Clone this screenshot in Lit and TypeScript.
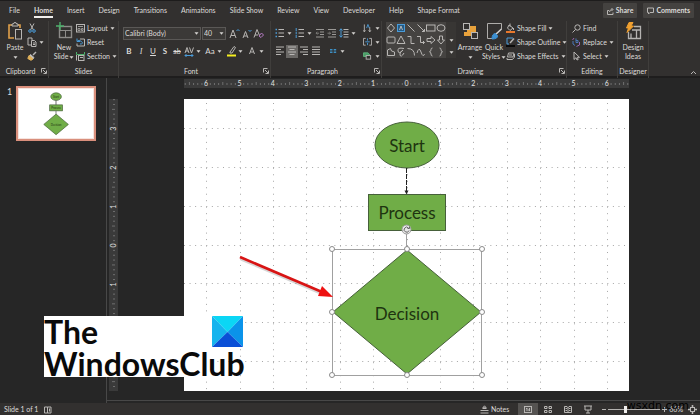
import { LitElement, html, svg, css, nothing } from "lit";
import { customElement, property, state } from "lit/decorators.js";
import { classMap } from "lit/directives/class-map.js";

const icon = (w: number, h: number, body: unknown) =>
  html`<svg class="icon" width=${w} height=${h} viewBox="0 0 ${w} ${h}" fill="none" stroke="#b8b6b4" aria-hidden="true">${body}</svg>`;

const chevron = html`<svg class="chev" width="5" height="3" viewBox="0 0 5 3" aria-hidden="true"><path d="M0.5 0.3h4L2.5 2.7z" fill="#d6d4d2" /></svg>`;
const launcher = (name: string) => html`<button class="launch" aria-label="${name} settings">
  ${icon(6, 6, svg`<path d="M0.5 4.5v-4h4M2 2l3 3M5.5 2.5v3h-3" />`)}
</button>`;

const icons = {
  paste: icon(16, 18, svg`<path d="M5 3H2v13h5M11 3h2v3" stroke="#e0a04a" stroke-width="1.6" /><path d="M5 4V2h1.500a1.500 1.500 0 0 1 3 0H11v2z" stroke="#bdbbb9" /><rect x="8.500" y="7.500" width="6" height="9.500" fill="#32302f" />`),
  cut: icon(8, 10, svg`<path d="M2 0.5L5.500 7M6 0.5L2.500 7" /><circle cx="2" cy="8" r="1.300" stroke="#4a9bd8" /><circle cx="6" cy="8" r="1.300" stroke="#4a9bd8" />`),
  copy: icon(10, 10, svg`<path d="M4 8H1V1h4v2M4.500 3.500h3l1.500 1.500v4.500H4.500zM6 6h2M6 7.500h2" />`),
  painter: icon(10, 10, svg`<path d="M9 1L6 4" stroke-width="1.500" /><path d="M3.500 3.500l3.500 3L6 8 2.500 4.500z" fill="#c4c2c0" /><path d="M2 4.500L0.800 7.500 4 9.300 6 8z" fill="#e2b25a" stroke="#e2b25a" />`),
  newSlide: icon(17, 18, svg`<rect x="3.500" y="4.500" width="12" height="11" stroke="#8d8b89" stroke-width="1.400" /><path d="M3.500 8.500h12M9.500 8.500v7" stroke="#8d8b89" /><path d="M4 0v8M0 4h8" stroke="#4db06c" stroke-width="1.400" />`),
  layout: icon(9, 9, svg`<rect x="0.500" y="0.500" width="8" height="7.500" /><path d="M2 2.500h5M2 4.500h2v2H2zM5.500 4.500H7v2H5.500z" stroke="#9a9896" />`),
  reset: icon(9, 9, svg`<path d="M4 1h4.500v7H1V5.500" /><path d="M1 0.500v3h3M1 3.500Q3 1 5.500 3.500T4 6" stroke="#4a9bd8" />`),
  section: icon(9, 9, svg`<path d="M0.500 0v2.500h8V0" stroke="#4db06c" /><rect x="2.500" y="3.500" width="5.500" height="5" /><path d="M0.500 3v5.500M4 5.500h3" />`),
  grow: icon(11, 11, svg`<path d="M1 10L4 2l3 8M2 7.500h4" /><path d="M7.500 3L9 1.500 10.500 3" stroke="#4a9bd8" />`),
  shrink: icon(11, 11, svg`<path d="M2 10l2.500-6.500L7 10M3 8h3" /><path d="M7.500 2L9 3.500 10.500 2" stroke="#4a9bd8" />`),
  clear: icon(11, 11, svg`<path d="M1 9.500L4 1.500l2.500 6M2 7h3" /><path d="M6 8l2.500-3L10.500 7 8 9.500z" stroke="#b57ac4" />`),
  spacing: icon(11, 11, svg`<path d="M1 7l2-5.500L5 7M2 5h2M5.500 1.500l2 5.500 2-5.500" /><path d="M1 9.500h8M2.500 8L1 9.500 2.500 11M7.500 8L9 9.500 7.500 11" stroke="#4a9bd8" />`),
  highlight: icon(11, 12, svg`<path d="M4 7l4-5.500 1.500 1L6 8H4z" /><path d="M1 10.500h9" stroke="#f5ee20" stroke-width="2" />`),
  fontColor: icon(10, 10, svg`<path d="M2.500 8L5 1.500 7.500 8M3.500 6h3" />`),
  bullets: icon(10, 10, svg`<path d="M3.500 1.500H9M3.500 5H9M3.500 8.500H9" /><path d="M0.500 1.500H2M0.500 5H2M0.500 8.500H2" stroke="#4a9bd8" stroke-width="1.500" />`),
  numbers: icon(10, 10, svg`<path d="M3.500 1.500H9M3.500 5H9M3.500 8.500H9" /><path d="M1.200 0v3M1.200 3.700v2.600M1.200 7v3" stroke="#4a9bd8" />`),
  outdent: icon(10, 10, svg`<path d="M1 1.500h8M5 4h4M5 6.500h4M1 9h8" stroke="#9a9896" /><path d="M4 5.200H1M2.300 4L1 5.200l1.300 1.300" stroke="#7d7b79" />`),
  indent: icon(10, 10, svg`<path d="M1 1.500h8M5 4h4M5 6.500h4M1 9h8" stroke="#9a9896" /><path d="M0.500 5.200h3M2.300 4l1.300 1.200L2.300 6.500" stroke="#7d7b79" />`),
  lineSpacing: icon(10, 10, svg`<path d="M4.500 1.500H9.500M4.500 4H9.500M4.500 6.500h5M4.500 9h5" /><path d="M2 0.800v8.400M0.500 2.500L2 0.800l1.500 1.700M0.500 7.500L2 9.200l1.500-1.700" stroke="#4a9bd8" />`),
  direction: icon(10, 11, svg`<path d="M1.500 1v8M0.300 7.500l1.200 1.800 1.200-1.800M7.500 4v5M6.300 7.500l1.200 1.800 1.200-1.800" /><path d="M4 5l1.500-4L7 5" stroke="#4a9bd8" />`),
  alignText: icon(10, 10, svg`<path d="M3 1H0.500v7.500H3M7 1h2.500v7.500H7" /><path d="M2.500 4.800h5M5 1v2.500M5 6v2.500" stroke="#4a9bd8" />`),
  smartArt: icon(10, 10, svg`<path d="M0.500 1.500h5l2 2-2 2h-5z" fill="#4c9b68" stroke="#5cb57c" /><rect x="3.500" y="4.500" width="5" height="4" fill="#32302f" />`),
  left: icon(10, 10, svg`<path d="M1 1h8M1 3.500h5M1 6h8M1 8.500h5" />`),
  center: icon(10, 10, svg`<path d="M1 1h8M2.500 3.500h5M1 6h8M2.500 8.500h5" />`),
  right: icon(10, 10, svg`<path d="M1 1h8M4 3.500h5M1 6h8M4 8.500h5" />`),
  justify: icon(10, 10, svg`<path d="M1 1h8M1 3.500h8M1 6h8M1 8.500h8" />`),
  columns: icon(8, 8, svg`<path d="M1 2.500h2.500M1 4h2.500M1 5.500h2.500M4.700 2.500h2.500M4.700 4h2.500M4.700 5.500h2.500" stroke="#3d8fc4" />`),
  arrange: icon(16, 18, svg`<rect x="5.500" y="4.500" width="8" height="9" fill="#e8a23c" stroke="#e8a23c" /><rect x="1.500" y="1.500" width="6" height="6" fill="#32302f" /><rect x="9.500" y="10.500" width="6" height="6" fill="#32302f" /><rect x="2" y="10" width="4" height="4" fill="#e8a23c" stroke="none" />`),
  quick: icon(17, 18, svg`<path d="M8 16.500H1.500v-15h14V7" stroke="#aeacaa" /><path d="M15.500 7L9 13" stroke="#d6d4d2" stroke-width="1.600" /><path d="M9.500 11.500Q6 11.500 6 17q6 0 5.500-3.500z" fill="#3c8fd0" stroke="#3c8fd0" />`),
  fill: icon(9, 10, svg`<path d="M3 2l4 3-3 2.500L1.500 5zM4 0.500v3M7.500 5v2" /><path d="M0 9h9" stroke="#e8782c" stroke-width="2" />`),
  outline: icon(9, 10, svg`<path d="M7 1H1v6h2" stroke="#4a9bd8" /><path d="M8 1.500L4 6" stroke-width="1.400" /><path d="M0 9h9" stroke="#0a0a0a" stroke-width="2" />`),
  effects: icon(9, 9, svg`<path d="M2.500 1h5.500l-1 4H1.500z" /><path d="M1 6v1.500h5.500L8.500 5V2M3 3h3" />`),
  find: icon(9, 9, svg`<circle cx="5.500" cy="3.500" r="2.700" /><path d="M3.500 5.500L0.500 8.500" />`),
  replace: icon(9, 10, svg`<path d="M4 1.500v4M4 3.500h2v2H4M1 4v3l2 1.500" stroke="#4a78b8" /><path d="M7.500 5v3l-3 1.500M2 1L0.500 3" stroke="#9a66b0" />`),
  select: icon(9, 10, svg`<path d="M2 1v7.500L4 6.700 5 9l1.200-0.500L5.300 6.300h2.200z" />`),
  ideas: icon(17, 18, svg`<path d="M9 4.500h6.500v12H3.500V10M7 8h8.500M11.500 8v8.500M6 11.500v5" stroke="#b5b3b1" stroke-width="1.300" /><path d="M4 0.500h4L6 4h2.500L2 10.500 3.500 6H1.500z" fill="#f0a030" stroke="#f0a030" />`),
  share: icon(7, 8, svg`<path d="M2 3.500H0.500v4h5.500v-2M2.500 5Q2.500 2.500 5.500 2.500M4.500 1l1.500 1.500L4.500 4" />`),
  comment: icon(7, 8, svg`<path d="M0.500 1h6v4.500H3L1.500 7V5.500h-1z" />`),
  spell: icon(8, 8, svg`<path d="M0.500 1h3v6h-3zM3.500 1H7v6H3.500M5.500 2.500v3" />`),
  notes: icon(9, 10, svg`<path d="M0.500 5.500h8M0.500 8h8M2.500 3.500h4M4.500 0.800L2.800 2.800h3.400z" />`),
  normal: icon(10, 9, svg`<rect x="1.500" y="1.500" width="7" height="6" /><path d="M3 5h3M3 3.500h1.500M6.500 3v3" />`),
  sorter: icon(10, 9, svg`<path d="M1.500 1.500h2.500v2H1.500zM6 1.500h2.500v2H6zM1.500 5.500h2.500v2H1.500zM6 5.500h2.500v2H6z" />`),
  reading: icon(10, 9, svg`<path d="M5 2v6M1.500 1.500H4L5 2.500l1-1h2.500v6H1.500zM2.500 3.500h1.500M6 3.500h1.500M2.500 5.500h1.500M6 5.500h1.500" />`),
  show: icon(10, 9, svg`<path d="M1 1h8M2 1v4h6V1M5 5v3M3 8h4" />`),
  fit: icon(9, 9, svg`<rect x="2.500" y="2.500" width="4" height="4" /><path d="M4.500 0v2M4.500 7v2M0 4.500h2M7 4.500h2" stroke-width="1.600" />`),
};

const shapes: [string, unknown][] = [
  ["Diamond", svg`<path d="M5 2l3.500 4L5 10 1.500 6z" />`],
  ["Text box", svg`<rect x="1.500" y="2.500" width="7" height="7" fill="#245a84" stroke="#4a9bd8" /><path d="M3.500 8L5 4l1.500 4" />`],
  ["Line", svg`<path d="M1.500 2.500l7 7" />`],
  ["Arrow", svg`<path d="M1.500 2.500l7 7M8.500 7v2.500H6" />`],
  ["Rectangle", svg`<rect x="0.500" y="3" width="8.500" height="6" />`],
  ["Oval", svg`<ellipse cx="5" cy="6" rx="4" ry="3.300" />`],
  ["Rounded rectangle", svg`<rect x="1" y="3" width="8" height="6" rx="1" />`],
  ["Triangle", svg`<path d="M5 2l4 7.500H1z" />`],
  ["Elbow connector", svg`<path d="M1.500 2.500H5v7h3.500" />`],
  ["Elbow arrow", svg`<path d="M1 2.500h3.500v6H8.500M7 7l1.500 1.500L7 10" />`],
  ["Right arrow", svg`<path d="M1 4.500h4v-2L9 6 5 9.500v-2H1z" />`],
  ["Down arrow", svg`<path d="M3.500 2h3v4h2L5 10 1.500 6h2z" />`],
  ["Freeform", svg`<path d="M1.500 9.500V4l3-1.500 1 2.500 3 1v3.500z" />`],
  ["Scribble", svg`<path d="M8 2.500Q1 1 2 5t5-1Q3 6 4 9t4-2" />`],
  ["Arc", svg`<path d="M1.500 2.500Q8.500 2.500 8.500 9.500" />`],
  ["Curve", svg`<path d="M1 7Q3 0 5 6t3.500 2" />`],
  ["Left brace", svg`<path d="M6.500 2Q5 2 5 3.500T3.500 6Q5 6 5 8t1.500 2" />`],
  ["Right brace", svg`<path d="M3.500 2Q5 2 5 3.500T6.500 6Q5 6 5 8t-1.500 2" />`],
];

/** Flowchart slide; the editor shows it with grid, selection frame and callout arrow. */
@customElement("slide-view")
class SlideView extends LitElement {
  @property({ type: Boolean, reflect: true }) editing = false;

  static styles = css`
    :host { display: block; background: #fff; }
    svg { display: block; width: 100%; height: auto; overflow: hidden; }
    .label { font: 17px Lato, sans-serif; fill: #1e3410; text-anchor: middle; }
    .shape { fill: #70ad47; stroke: #46603a; stroke-width: 4; }
    :host([editing]) .shape { stroke-width: 1; }
    .grid { stroke: #a6a6a6; }
    .frame { fill: none; stroke: #a0a0a0; }
    .handle { fill: #fff; stroke: #8a8a8a; }
  `;

  private gridLines() {
    const steps = [-6, -5, -4, -3, -2, -1, 0, 1, 2, 3, 4, 5, 6];
    return svg`
      ${steps.map((n) => svg`<path class="grid" stroke-dasharray="1 5.480" d="M${Math.round(222.5 + n * 33.4) + 0.5} 4v288" />`)}
      ${[-3, -2, -1, 0, 1, 2, 3].map((n) => svg`<path class="grid" stroke-dasharray="1 4.570" d="M0 ${Math.round(146.5 + n * 38.9) - 0.5}h445" />`)}`;
  }

  private selection() {
    const points = [[148, 150], [223, 150], [298, 150], [148, 213], [298, 213], [148, 276], [223, 276], [298, 276]];
    return svg`
      <path class="frame" d="M148.500 150.500h149v126h-149zM222.500 135v15" />
      ${points.map(([x, y]) => svg`<circle class="handle" cx=${x} cy=${y} r="2.500" />`)}
      <circle cx="222.500" cy="130.500" r="4.500" fill="#e8e8e8" stroke="#9a9a9a" />
      <path d="M224.500 129a2.500 2.500 0 1 0 0.500 2.500M225.500 127.500v2h-2" fill="none" stroke="#666" />`;
  }

  render() {
    return html`<svg viewBox="0 0 445 292" role="img" aria-label="Flowchart">
      ${this.editing ? this.gridLines() : nothing}
      <ellipse class="shape" cx="223" cy="46" rx="32" ry="23" />
      <path d="M222.500 69v24" stroke="#222" stroke-dasharray="5 1" />
      <path d="M220.500 91.500h4l-2 4z" fill="#222" />
      <rect class="shape" x="184.500" y="95.500" width="77" height="36" />
      <path class="shape" d="M223 151l74 62-74 62-74-62z" />
      ${this.editing ? nothing : svg`<path d="M222.500 69v26M222.500 132v19" stroke="#666" stroke-width="5" />`}
      <text class="label" x="223" y="53">Start</text>
      <text class="label" x="223" y="120">Process</text>
      <text class="label" x="223" y="221">Decision</text>
      ${this.editing ? this.selection() : nothing}
      ${this.editing
        ? svg`<path d="M57 160l82 35" stroke="#777" stroke-opacity="0.3" stroke-width="3" />
          <path d="M56 158l82 35" stroke="#d81414" stroke-width="2.600" />
          <path d="M138 187l11 11-15 -1z" fill="#ee1111" />`
        : nothing}
    </svg>`;
  }
}

@customElement("app-root")
class AppRoot extends LitElement {
  @state() private tab = "Home";

  static styles = css`
    :host {
      display: flex; flex-direction: column; min-height: 100vh; position: relative;
      background: #262626; color: #dddbd9; font: 7px/9px Lato, sans-serif; overflow: hidden;
    }
    * { box-sizing: border-box; }
    button, select {
      appearance: none; border: 0; padding: 0; margin: 0; background: none;
      color: inherit; font: inherit; text-align: inherit; border-radius: 0;
    }
    button { display: flex; align-items: center; white-space: nowrap; }
    svg { flex: none; display: block; }

    .tabs { display: flex; align-items: center; height: 20px; padding: 0 6px 0 9px; background: #32302f; border-top: 1px solid #1d1c1c; }
    .tabs nav { display: flex; gap: 14px; flex: 1; }
    .tab { height: 15px; border-top: 2px solid transparent; border-bottom: 2px solid transparent; }
    .tab.on { border-bottom-color: #f0eeec; font-weight: 700; }
    .pill { height: 15px; gap: 2px; padding: 0 4px; margin-left: 6px; background: #444240; border-radius: 1px; font-weight: 700; }

    .ribbon {
      display: grid; grid-template-columns: 49px 70px 152px 111px 185px 51px 31px 1fr;
      height: 58px; padding-top: 1px; background: #32302f; border-bottom: 2px solid #1e1d1d;
    }
    .group { display: flex; flex-direction: column; border-right: 1px solid #403e3c; min-width: 0; }
    .body { display: flex; height: 43px; }
    .foot { display: flex; align-items: center; height: 14px; }
    .foot span { flex: 1; text-align: center; white-space: nowrap; }
    .launch { width: 7px; }
    .big { flex-direction: column; justify-content: flex-start; gap: 3px; padding-top: 1px; width: 24px; height: 43px; }
    .big .text { text-align: center; }
    .big .chev { display: inline-block; vertical-align: middle; margin-left: 1px; }
    .list { display: flex; flex-direction: column; }
    .list button { height: 14px; gap: 2px; }
    .list .icon { width: 9px; }
    .clip { padding-left: 3px; }
    .clip .list button .icon { width: 10px; }
    .slides { padding-left: 3px; }
    .rows { display: flex; flex-direction: column; padding: 3px 0 0 3px; flex: 1; }
    .row { display: flex; align-items: center; height: 18px; }
    .tool { width: 12px; height: 13px; justify-content: center; font-size: 8px; }
    .tool.on { background: #6a6866; }
    .split { width: 20px; height: 13px; gap: 1px; font-size: 8px; }
    .split .face { display: flex; justify-content: center; width: 12px; }
    .split.apart { margin-left: 5px; }
    .bold { font-weight: 700; }
    .italic { font-style: italic; font-family: "Liberation Serif", serif; }
    .under { text-decoration: underline; }
    .strike { text-decoration: line-through; font-size: 7px; }
    .font .rows { padding-left: 4px; }
    .font .split { width: 21px; }
    .combo { display: grid; align-items: center; width: 78px; height: 13px; background: #3b3937; border: 1px solid #5a5856; margin-right: 1px; }
    .combo.size { width: 24px; margin-right: 2px; }
    .combo > * { grid-area: 1 / 1; }
    .combo select { width: 100%; padding-left: 1px; }
    .combo .chev { justify-self: end; margin-right: 1px; pointer-events: none; }
    .drawing { padding-left: 4px; }
    .gallery { display: grid; grid-template-columns: repeat(6, 10px) 10px; grid-auto-rows: 12px; margin: 1px 2px 0 0; height: 38px; }
    .gallery .cell { width: 10px; height: 12px; background: #454341; }
    .gallery .more { grid-column: 7; justify-content: center; background: #383634; height: 12px; }
    .drawing .list button, .editing .list button { height: 14px; }
    .editing { padding-left: 5px; }
    .designer { justify-content: center; }
    .collapse { display: flex; justify-content: flex-end; align-items: flex-end; padding: 0 3px 3px 0; }

    main { display: flex; flex: 1; }
    aside { width: 107px; padding: 8px 10px 0 7px; border-right: 1px solid #484848; display: flex; align-items: flex-start; gap: 5px; }
    .number { width: 4px; font-size: 9px; line-height: 11px; }
    .thumb { display: block; flex: 1; margin-bottom: 4px; border: 2px solid #d98f7c; padding: 1px; background: #f6e4df; }
    .editor {
      flex: 1; display: grid; grid-template-columns: 9px 1fr; grid-template-rows: 9px auto; row-gap: 11px;
      column-gap: 66px; padding: 1px 71px 9px 2px; margin-bottom: 2px; border-bottom: 1px solid #484848; align-content: start;
    }
    .ruler { background: #3a3a3a; width: 100%; height: auto; }
    .ruler text { font: 7px Lato, sans-serif; fill: #e4e4e4; text-anchor: middle; }
    .ruler.top { grid-column: 2; }

    footer { display: flex; align-items: center; height: 13px; background: #32302f; padding: 0 3px 0 4px; }
    footer .spell { margin-left: 6px; flex: 1; }
    footer .notes { gap: 2px; margin-right: 9px; }
    .view { width: 20px; height: 13px; justify-content: center; }
    .view.on { background: #555351; }
    .zoom { display: flex; align-items: center; gap: 2px; margin-left: 4px; }
    .zoom input { appearance: none; width: 52px; height: 9px; margin: 0; background: linear-gradient(#b4b2b0, #b4b2b0) center / 100% 1px no-repeat; }
    .zoom input::-webkit-slider-thumb { appearance: none; width: 3px; height: 7px; background: #f0eeec; }
    .percent { margin: 0 5px 0 2px; }

    .brand { position: absolute; left: 44px; bottom: 39px; width: 170px; height: 61px; background: #fff; color: #0a0a0a; font: 700 32px/32px Lato, sans-serif; white-space: nowrap; }
    .brand p { margin: 0; }
    .brand svg { position: absolute; left: 168px; top: 0; }
    .mark { position: absolute; right: 11px; bottom: 4px; color: #000; font: 11px/13px "DejaVu Sans", sans-serif; }
  `;

  private tool(label: string, face: unknown, cls = "") {
    return html`<button class="tool ${cls}" aria-label=${label}>${face}</button>`;
  }

  private split(label: string, face: unknown, cls = "") {
    return html`<button class="split ${cls}" aria-label=${label}><span class="face">${face}</span>${chevron}</button>`;
  }

  private item(face: unknown, text: string, menu = false) {
    return html`<button>${face}<span>${text}</span>${menu ? chevron : nothing}</button>`;
  }

  private foot(text: string, launch = false) {
    return html`<div class="foot"><span>${text}</span>${launch ? launcher(text) : nothing}</div>`;
  }

  private ticks(length: number, center: number, step: number, y: number) {
    const out = [];
    for (let x = center % (step / 8); x < length; x += step / 8) {
      const n = Math.round(((x - center) / step) * 8);
      if (n % 8 !== 0) out.push(svg`<path d="M${x} ${n % 4 ? 4 : 3}V${y}" stroke="#868686" stroke-width="0.700" />`);
    }
    return out;
  }

  private renderRibbon() {
    return html`<section class="ribbon" aria-label="Ribbon">
      <div class="group">
        <div class="body clip">
          <button class="big"><span>${icons.paste}</span><span class="text">Paste<br />${chevron}</span></button>
          <div class="list">
            <button aria-label="Cut">${icons.cut}</button>
            <button aria-label="Copy">${icons.copy}${chevron}</button>
            <button aria-label="Format painter">${icons.painter}</button>
          </div>
        </div>
        ${this.foot("Clipboard", true)}
      </div>
      <div class="group">
        <div class="body slides">
          <button class="big"><span>${icons.newSlide}</span><span class="text">New<br />Slide${chevron}</span></button>
          <div class="list">
            ${this.item(icons.layout, "Layout", true)}${this.item(icons.reset, "Reset")}${this.item(icons.section, "Section", true)}
          </div>
        </div>
        ${this.foot("Slides")}
      </div>
      <div class="group">
        <div class="body font">
          <div class="rows">
            <div class="row">
              <div class="combo"><select aria-label="Font"><option>Calibri (Body)</option></select>${chevron}</div>
              <div class="combo size"><select aria-label="Font size"><option>40</option></select>${chevron}</div>
              ${this.tool("Increase font size", icons.grow)}${this.tool("Decrease font size", icons.shrink)}${this.tool("Clear formatting", icons.clear)}
            </div>
            <div class="row">
              ${this.tool("Bold", "B", "bold")}${this.tool("Italic", "I", "italic")}${this.tool("Underline", "U", "under")}${this.tool("Shadow", "S", "bold")}${this.tool("Strikethrough", "ab", "strike")}
              ${this.split("Character spacing", icons.spacing)}${this.split("Change case", "Aa")}${this.split("Highlight", icons.highlight)}${this.split("Font color", icons.fontColor)}
            </div>
          </div>
        </div>
        ${this.foot("Font", true)}
      </div>
      <div class="group">
        <div class="body">
          <div class="rows">
            <div class="row">
              ${this.split("Bullets", icons.bullets)}${this.split("Numbering", icons.numbers)}${this.tool("Decrease indent", icons.outdent)}${this.tool("Increase indent", icons.indent)}${this.split("Line spacing", icons.lineSpacing)}
            </div>
            <div class="row">
              ${this.tool("Align left", icons.left)}${this.tool("Center", icons.center, "on")}${this.tool("Align right", icons.right)}${this.tool("Justify", icons.justify)}${this.split("Columns", icons.columns, "apart")}
            </div>
          </div>
          <div class="list">
            ${this.split("Text direction", icons.direction)}${this.split("Align text", icons.alignText)}${this.split("SmartArt", icons.smartArt)}
          </div>
        </div>
        ${this.foot("Paragraph", true)}
      </div>
      <div class="group">
        <div class="body drawing">
          <div class="gallery">
            ${shapes.map(([name, body], i) => html`<button class="cell" aria-label=${name}>${icon(10, 12, body)}</button>
              ${i % 6 === 5 ? html`<button class="more" aria-label="Gallery row">${i === 5 ? nothing : chevron}</button>` : nothing}`)}
          </div>
          <button class="big"><span>${icons.arrange}</span><span class="text">Arrange<br />${chevron}</span></button>
          <button class="big"><span>${icons.quick}</span><span class="text">Quick<br />Styles${chevron}</span></button>
          <div class="list">
            ${this.item(icons.fill, "Shape Fill", true)}${this.item(icons.outline, "Shape Outline", true)}${this.item(icons.effects, "Shape Effects", true)}
          </div>
        </div>
        ${this.foot("Drawing", true)}
      </div>
      <div class="group">
        <div class="body editing">
          <div class="list">
            ${this.item(icons.find, "Find")}${this.item(icons.replace, "Replace", true)}${this.item(icons.select, "Select", true)}
          </div>
        </div>
        ${this.foot("Editing")}
      </div>
      <div class="group">
        <div class="body designer"><button class="big"><span>${icons.ideas}</span><span class="text">Design<br />Ideas</span></button></div>
        ${this.foot("Designer")}
      </div>
      <div class="collapse"><button aria-label="Collapse ribbon">${icon(7, 5, svg`<path d="M1 4l2.500-2.500L6 4" />`)}</button></div>
    </section>`;
  }

  render() {
    const tabs = ["File", "Home", "Insert", "Design", "Transitions", "Animations", "Slide Show", "Review", "View", "Developer", "Help", "Shape Format"];
    return html`
      <header class="tabs">
        <nav>
          ${tabs.map((t) => html`<button class=${classMap({ tab: true, on: t === this.tab })} @click=${() => (this.tab = t)}>${t}</button>`)}
        </nav>
        <button class="pill">${icons.share}Share</button>
        <button class="pill">${icons.comment}Comments</button>
      </header>
      ${this.renderRibbon()}
      <main>
        <aside>
          <span class="number">1</span>
          <button class="thumb" aria-label="Slide 1"><slide-view></slide-view></button>
        </aside>
        <section class="editor" aria-label="Slide editor">
          <svg class="ruler top" viewBox="0 0 445 9">
            ${this.ticks(445, 222.5, 33.4, 6)}
            ${[-6, -5, -4, -3, -2, -1, 0, 1, 2, 3, 4, 5, 6].map((n) => svg`<text x=${222.5 + n * 33.4} y="7">${Math.abs(n)}</text>`)}
          </svg>
          <svg class="ruler" viewBox="0 0 9 292">
            <g transform="rotate(-90) translate(-292 0)">
              ${this.ticks(292, 145.5, 38.9, 6)}
              ${[-3, -2, -1, 0, 1, 2, 3].map((n) => svg`<text x=${145.5 + n * 38.9} y="7">${Math.abs(n)}</text>`)}
            </g>
          </svg>
          <slide-view editing></slide-view>
        </section>
      </main>
      <footer>
        <span>Slide 1 of 1</span>
        <button class="spell" aria-label="Spelling">${icons.spell}</button>
        <button class="notes">${icons.notes}Notes</button>
        <button class="view on" aria-label="Normal">${icons.normal}</button>
        <button class="view" aria-label="Slide sorter">${icons.sorter}</button>
        <button class="view" aria-label="Reading view">${icons.reading}</button>
        <button class="view" aria-label="Slide show">${icons.show}</button>
        <div class="zoom">
          <button aria-label="Zoom out">${icon(4, 5, svg`<path d="M0 2.500h4" />`)}</button>
          <input type="range" aria-label="Zoom" min="10" max="190" value="66" />
          <button aria-label="Zoom in">${icon(5, 5, svg`<path d="M0 2.500h5M2.500 0v5" />`)}</button>
        </div>
        <span class="percent">66%</span>
        <button aria-label="Fit slide to window">${icons.fit}</button>
      </footer>
      <div class="brand">
        <p>The</p>
        <p>WindowsClub</p>
        <svg width="31" height="31" viewBox="0 0 31 31" aria-hidden="true">
          <path d="M0 0h31L15.500 16z" fill="#0bd6f5" /><path d="M0 0l15.500 16L0 31z" fill="#16b4ee" />
          <path d="M31 0v31L15.500 16z" fill="#0a93ea" /><path d="M0 31l15.500-15L31 31z" fill="#0a4fd6" />
        </svg>
      </div>
      <span class="mark">wsxdn.com</span>`;
  }
}
